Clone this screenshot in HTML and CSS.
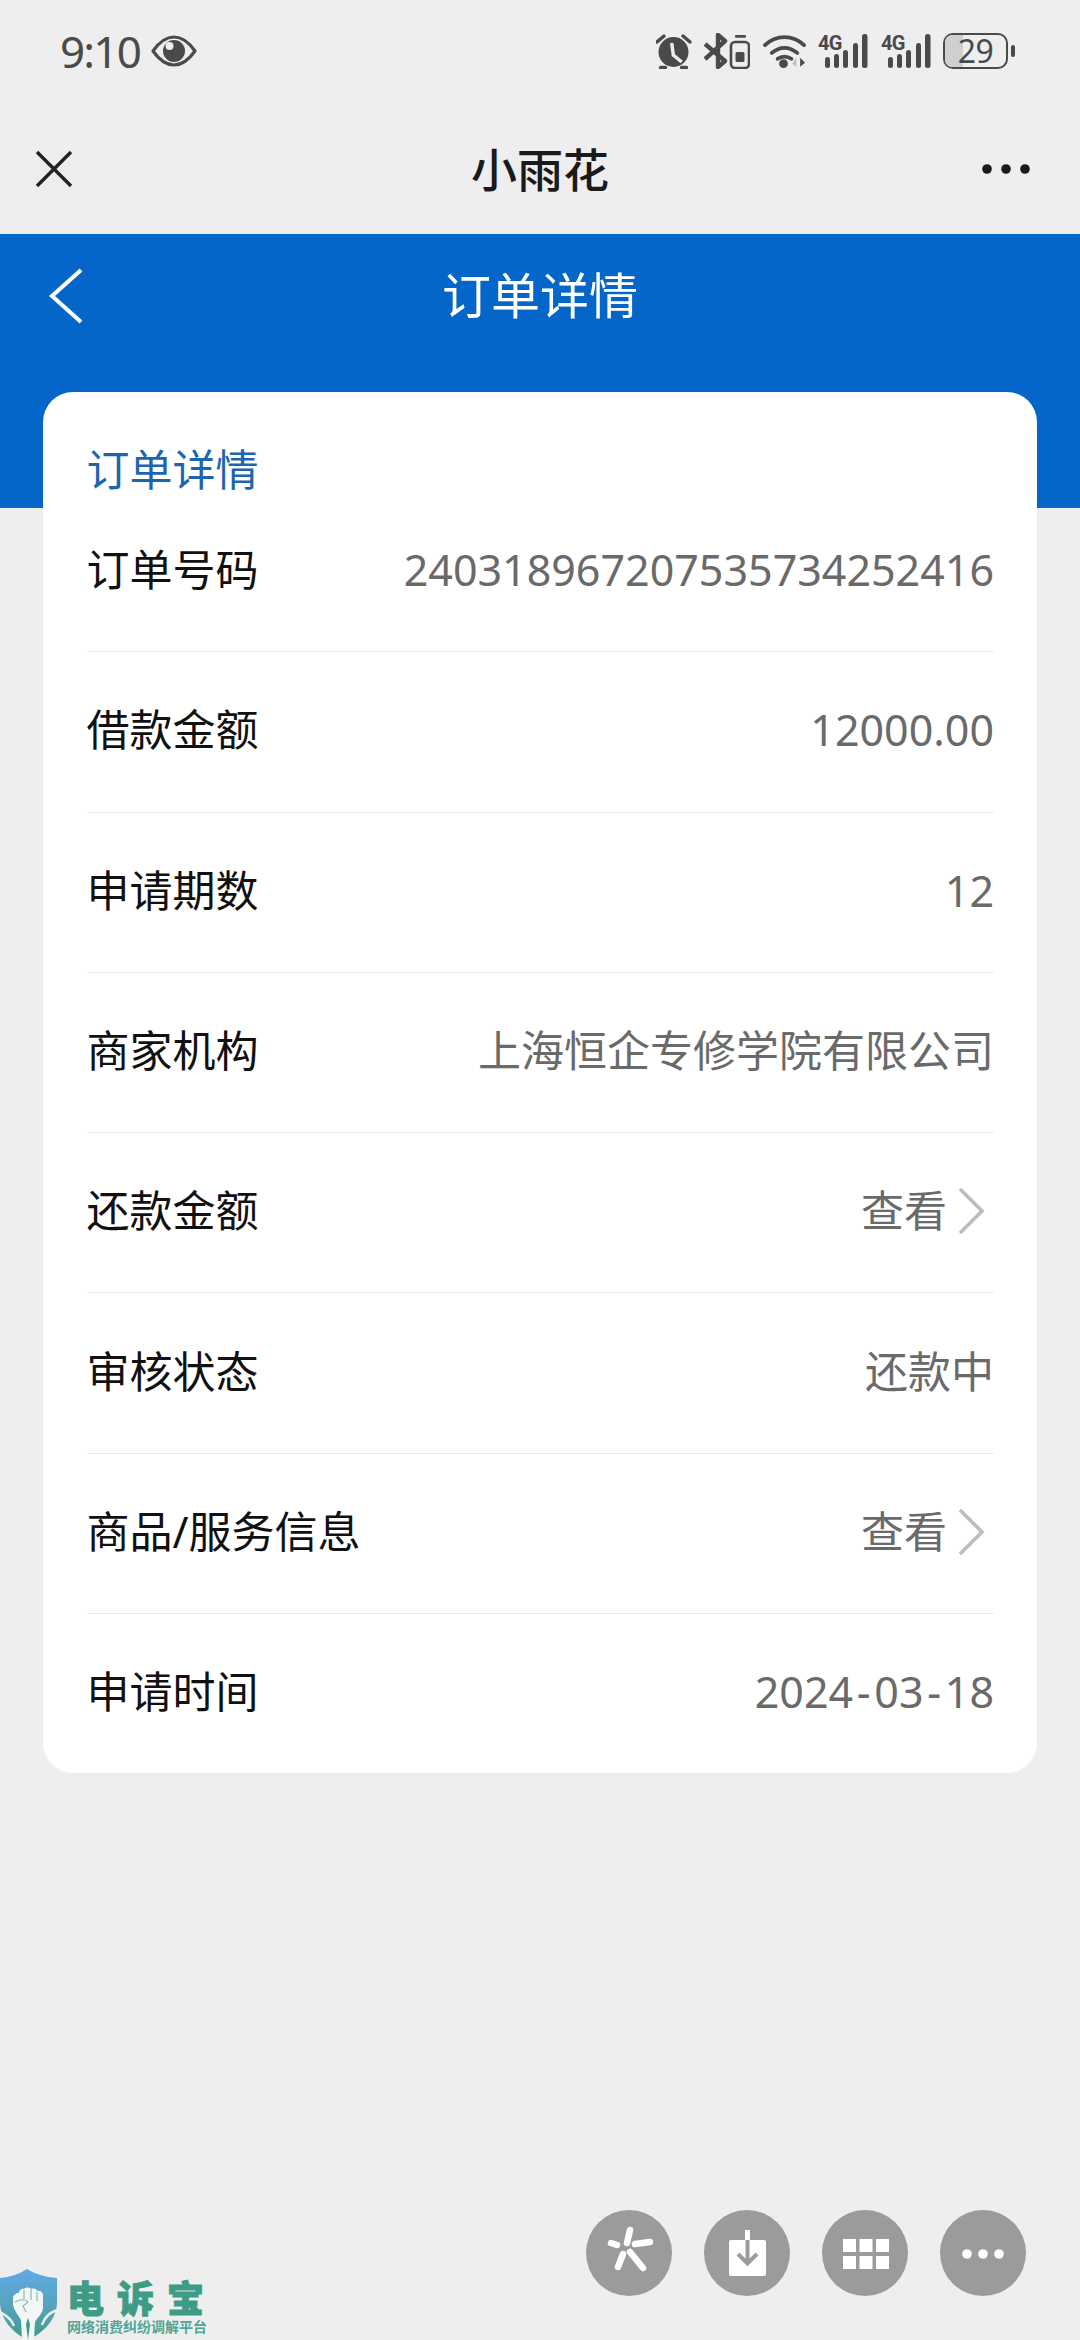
FILE: index.html
```html
<!DOCTYPE html>
<html lang="zh-CN">
<head>
<meta charset="utf-8">
<title>订单详情</title>
<link rel="stylesheet" href="styles.css">
</head>
<body>
<div class="screen">
  <header class="status">
    <div class="status-left">
      <span class="time">9:10</span>
      <svg class="eye" viewBox="0 0 46 32" width="46" height="32"><path d="M2 16C9 6 15 2 23 2s14 4 21 14c-7 10-13 14-21 14S9 26 2 16z" fill="none" stroke="#4a4a4a" stroke-width="3.2" stroke-linejoin="round"/><circle cx="23" cy="16" r="11" fill="#4a4a4a"/><circle cx="18.500" cy="11" r="4" fill="#eee"/></svg>
    </div>
    <div class="status-right">
      <svg class="ic-alarm" viewBox="0 0 36 36" width="36" height="36"><circle cx="17.500" cy="19" r="15" fill="#4a4a4a"/><path d="M15.700 10l1.600 12 8.400 7" fill="none" stroke="#eee" stroke-width="3.400"/><path d="M1 9l7-6M27 3l7 6M4.500 34.500h5M25.500 34.500h5" stroke="#4a4a4a" stroke-width="3.400" stroke-linecap="round"/></svg>
      <svg class="ic-bt" viewBox="0 0 46 36" width="46" height="36"><path d="M1 11l20 17-7 6V2l7 6L1 26" fill="none" stroke="#4a4a4a" stroke-width="4.400" stroke-linejoin="round"/><rect x="27" y="9" width="18" height="26" rx="4" fill="none" stroke="#4a4a4a" stroke-width="2.600"/><rect x="31" y="2" width="11" height="2.800" rx="1" fill="#4a4a4a"/><rect x="31.500" y="19" width="9" height="10" rx="1.500" fill="#4a4a4a"/></svg>
      <svg class="ic-wifi" viewBox="0 0 44 36" width="43" height="36"><path d="M2 12C13 1 31 1 42 12M9 20c8-7 18-7 26 0M15 26c4-3 10-3 14 0" fill="none" stroke="#4a4a4a" stroke-width="3.800" stroke-linecap="round"/><circle cx="21" cy="31" r="4.500" fill="#4a4a4a"/><path d="M34 25v9l-4-3z" fill="#bbb"/><path d="M38 25v9l5-4z" fill="#4a4a4a"/></svg>
      <svg class="ic-sig" viewBox="0 -4 50 40" width="50" height="40"><text x="0" y="17" class="four-g">4G</text><rect x="7" y="24" width="5" height="11" rx="2.500"/><rect x="16" y="21" width="5" height="14" rx="2.500"/><rect x="25" y="17" width="5" height="18" rx="2.500"/><rect x="35" y="10" width="5" height="25" rx="2.500"/><rect x="44" y="1" width="5.500" height="34" rx="2.500"/></svg>
      <svg class="ic-sig" viewBox="0 -4 50 40" width="50" height="40"><text x="0" y="17" class="four-g">4G</text><rect x="7" y="24" width="5" height="11" rx="2.500"/><rect x="16" y="21" width="5" height="14" rx="2.500"/><rect x="25" y="17" width="5" height="18" rx="2.500"/><rect x="35" y="10" width="5" height="25" rx="2.500"/><rect x="44" y="1" width="5.500" height="34" rx="2.500"/></svg>
      <div class="battery">
        <div class="battery-body">
          <span class="battery-fill"></span>
          <span class="battery-num">29</span>
        </div>
        <span class="battery-tip"></span>
      </div>
    </div>
  </header>

  <nav class="nav">
    <svg class="nav-close" viewBox="0 0 38 38" width="38" height="38"><path d="M2 2l34 34M36 2L2 36" stroke="#222" stroke-width="3.400" fill="none"/></svg>
    <h1 class="nav-title">小雨花</h1>
    <svg class="nav-more" viewBox="0 0 50 10" width="50" height="10"><circle cx="5" cy="5" r="4.800"/><circle cx="24" cy="5" r="4.800"/><circle cx="43" cy="5" r="4.800"/></svg>
  </nav>

  <section class="banner">
    <svg class="back" viewBox="0 0 36 58" width="36" height="58"><path d="M33 2L4 28l29 26" fill="none" stroke="#fff" stroke-width="4"/></svg>
    <h2 class="banner-title">订单详情</h2>
  </section>

  <main class="card">
    <h3 class="card-title">订单详情</h3>
    <div class="row first"><span class="label">订单号码</span><span class="value">240318967207535734252416</span></div>
    <div class="row"><span class="label">借款金额</span><span class="value">12000.00</span></div>
    <div class="row"><span class="label">申请期数</span><span class="value">12</span></div>
    <div class="row"><span class="label">商家机构</span><span class="value">上海恒企专修学院有限公司</span></div>
    <div class="row"><span class="label">还款金额</span><span class="value link">查看<svg class="chev" viewBox="0 0 28 48" width="28" height="48"><path d="M3 2l22 22L3 46" fill="none" stroke="#bdbdbd" stroke-width="3.600"/></svg></span></div>
    <div class="row"><span class="label">审核状态</span><span class="value">还款中</span></div>
    <div class="row"><span class="label">商品/服务信息</span><span class="value link">查看<svg class="chev" viewBox="0 0 28 48" width="28" height="48"><path d="M3 2l22 22L3 46" fill="none" stroke="#bdbdbd" stroke-width="3.600"/></svg></span></div>
    <div class="row last"><span class="label">申请时间</span><span class="value">2024<span class="dash">-</span>03<span class="dash">-</span>18</span></div>
  </main>

  <div class="fabs">
    <button class="fab"><svg viewBox="0 0 86 86" width="86" height="86"><path d="M41 33l3-13M31 35l-6-2M49 34l15-2M37 44l-5 13M44 42l13 16" stroke="#fff" stroke-width="6.500" stroke-linecap="round" fill="none"/></svg></button>
    <button class="fab"><svg viewBox="0 0 86 86" width="86" height="86"><rect x="25" y="30" width="37" height="36" rx="2" fill="#fff"/><rect x="41" y="20" width="5" height="11" fill="#fff"/><path d="M43.500 30v24M34 44l9.500 9.500L53 44" fill="none" stroke="#9b9b9b" stroke-width="4"/></svg></button>
    <button class="fab"><svg viewBox="0 0 86 86" width="86" height="86"><g fill="#fff"><rect x="21" y="29" width="13" height="13"/><rect x="37.500" y="29" width="13" height="13"/><rect x="54" y="29" width="13" height="13"/><rect x="21" y="46" width="13" height="13"/><rect x="37.500" y="46" width="13" height="13"/><rect x="54" y="46" width="13" height="13"/></g></svg></button>
    <button class="fab"><svg viewBox="0 0 86 86" width="86" height="86"><g fill="#fff"><circle cx="27" cy="44" r="4.800"/><circle cx="43" cy="44" r="4.800"/><circle cx="59" cy="44" r="4.800"/></g></svg></button>
  </div>

  <div class="logo">
    <svg class="shield" viewBox="0 0 58 72" width="58" height="72">
      <defs><linearGradient id="sg" x1="0" y1="0" x2="0" y2="1"><stop offset="0" stop-color="#62a9e6"/><stop offset=".55" stop-color="#55a3bb"/><stop offset="1" stop-color="#3d9c86"/></linearGradient></defs>
      <path d="M27 1c8 5 18 8 30 9v24c0 16-12 30-29 38C12 65 0 50 0 34V10C11 9 19 6 27 1z" fill="url(#sg)"/>
      <path d="M0 44c8 4 12 8 14 14M57 42c-8 3-13 8-15 15" stroke="#eee" stroke-width="2.500" fill="none"/>
      <path d="M13 30c0-3 3-5 6-5 0-3 3-5 5-4 2-2 5-2 7 0 3-1 6 0 6 2 3-1 6 1 6 4v13c0 5-6 10-8 14l-1 18H22l-1-20c-3-5-7-10-8-15z" fill="#f2f6f4"/>
      <path d="M24 22v9M31 21v11M37 24v9M15 34c5-3 11-3 13 0l-5 4 3 6" stroke="#8db8ae" stroke-width="1.200" fill="none"/>
      <path d="M28 50l-2 6 2 16 2-16z" fill="#3d9c86"/>
    </svg>
    <div class="logo-text">
      <span class="logo-name">电诉宝</span>
      <span class="logo-sub">网络消费纠纷调解平台</span>
    </div>
  </div>
</div>
</body>
</html>
```
FILE: styles.css
```css
* { box-sizing: border-box; }
html, body { margin: 0; padding: 0; }
body { font-family: "Noto Sans", "Noto Sans CJK SC", sans-serif; background: #eeeeee; }
h1, h2, h3 { margin: 0; font-weight: 400; }
.screen { position: relative; width: 1080px; height: 2340px; overflow: hidden; background: #eeeeee; }

.status { height: 100px; padding: 33px 65px 0 60px; display: flex; justify-content: space-between; align-items: flex-start; }
.status-left { display: flex; align-items: center; gap: 11px; height: 36px; }
.time { font-size: 44px; line-height: 36px; letter-spacing: -1.800px; color: #4a4a4a; }
.status-right { display: flex; align-items: center; gap: 12.500px; height: 36px; }
.ic-sig { fill: #4a4a4a; margin-top: -4px; }
.four-g { font-family: "Roboto", sans-serif; font-size: 20px; font-weight: 700; fill: #4a4a4a; letter-spacing: -0.800px; }
.battery { display: flex; align-items: center; gap: 3px; }
.battery-body { position: relative; width: 65px; height: 36px; border: 2.600px solid #4a4a4a; border-radius: 10px; display: flex; align-items: center; justify-content: center; }
.battery-fill { position: absolute; left: 0; top: 0; bottom: 0; width: 18px; background: #cfcfcf; border-radius: 7px 0 0 7px; }
.battery-num { position: relative; font-size: 32px; line-height: 30px; color: #4a4a4a; letter-spacing: -0.500px; }
.battery-tip { width: 4px; height: 12px; background: #4a4a4a; border-radius: 2px; }

.nav { height: 134px; padding: 3px 48px 0 35px; display: flex; align-items: center; justify-content: space-between; position: relative; }
.nav-title { font-size: 46px; font-weight: 500; color: #1a1a1a; line-height: 60px; position: absolute; left: 0; right: 0; text-align: center; }
.nav-more { fill: #1a1a1a; }

.banner { height: 274px; background: #0366c8; padding: 34px 0 0 48px; display: flex; align-items: flex-start; position: relative; }
.banner-title { position: absolute; left: 0; right: 0; top: 25px; text-align: center; color: #fff; font-size: 49px; line-height: 72px; }

.card { position: relative; margin: -116px 43px 0; height: 1381px; background: #fff; border-radius: 30px; padding: 0 43px 0 43.500px; }
.card-title { height: 100px; padding-top: 50px; font-size: 43px; line-height: 56px; color: #1c66b0; }
.row { height: 160.300px; display: flex; align-items: center; justify-content: space-between; border-bottom: 1px solid #ebebeb; padding-bottom: 3px; }
.row.last { border-bottom: 0; height: 159px; padding-bottom: 3px; }
.label { font-size: 43px; line-height: 60px; color: #111; }
.value { font-size: 43px; line-height: 60px; color: #6a6a6a; display: flex; align-items: center; }
.link { gap: 10px; margin-right: 9px; }
.dash { margin: 0 3.700px; }

.fabs { position: absolute; right: 54px; bottom: 44px; display: flex; gap: 32px; }
.fab { width: 86px; height: 86px; border: 0; padding: 0; border-radius: 50%; background: #9b9b9b; display: block; }
.fab svg { display: block; }

.logo { position: absolute; left: 0; bottom: 0; display: flex; gap: 9px; height: 72px; }
.shield { display: block; }
.logo-text { display: flex; flex-direction: column; padding-top: 9px; }
.logo-name { font-family: "Noto Sans CJK SC", sans-serif; font-size: 37px; line-height: 40px; font-weight: 900; letter-spacing: 13px; color: #3d9c86; -webkit-text-stroke: 1px #3d9c86; }
.logo-sub { font-family: "Noto Sans CJK SC", sans-serif; font-size: 14px; line-height: 18px; font-weight: 700; color: #4fa596; }
```
